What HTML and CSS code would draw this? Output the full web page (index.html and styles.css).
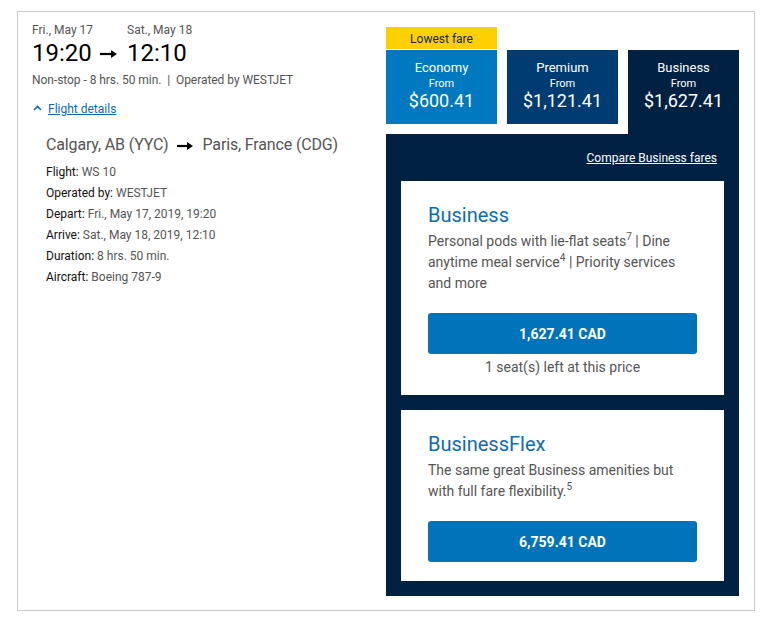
FILE: index.html
```html
<!DOCTYPE html>
<html lang="en">
<head>
<meta charset="utf-8">
<title>Flight YYC – CDG</title>
<link rel="stylesheet" href="styles.css">
</head>
<body>
<div class="result">
  <section class="flight">
    <div class="times">
      <div class="times-col first">
        <div class="date">Fri., May 17</div>
        <div class="clock"><span>19:20</span><svg class="arrow-lg" width="18" height="10" viewBox="0 0 18 10"><path d="M0 5h12" stroke="#000" stroke-width="2.2"/><path d="M11 1l6 4-6 4z" fill="#000"/></svg></div>
      </div>
      <div class="times-col">
        <div class="date">Sat., May 18</div>
        <div class="clock"><span>12:10</span></div>
      </div>
    </div>
    <div class="summary">Non-stop - 8 hrs. 50 min. &nbsp;|&nbsp; Operated by WESTJET</div>
    <div class="toggle">
      <svg class="chevron" width="9" height="6" viewBox="0 0 9 6"><path d="M1 5l3.5-3.5L8 5" fill="none" stroke="#0b6cb5" stroke-width="1.6"/></svg>
      <a href="#" class="link">Flight details</a>
    </div>
    <div class="details">
      <div class="route"><span>Calgary, AB (YYC)</span><svg class="arrow-md" width="17" height="10" viewBox="0 0 17 10"><path d="M0 5h11" stroke="#000" stroke-width="2.2"/><path d="M10 1l6 4-6 4z" fill="#000"/></svg><span>Paris, France (CDG)</span></div>
      <ul class="facts">
        <li><span class="label">Flight:</span> WS 10</li>
        <li><span class="label">Operated by:</span> WESTJET</li>
        <li><span class="label">Depart:</span> Fri., May 17, 2019, 19:20</li>
        <li><span class="label">Arrive:</span> Sat., May 18, 2019, 12:10</li>
        <li><span class="label">Duration:</span> 8 hrs. 50 min.</li>
        <li><span class="label">Aircraft:</span> Boeing 787-9</li>
      </ul>
    </div>
  </section>

  <section class="fares">
    <div class="tabs">
      <div class="tab-wrap">
        <div class="badge">Lowest fare</div>
        <div class="tab economy">
          <div class="tab-name">Economy</div>
          <div class="tab-from">From</div>
          <div class="tab-price">$600.41</div>
        </div>
      </div>
      <div class="tab premium">
        <div class="tab-name">Premium</div>
        <div class="tab-from">From</div>
        <div class="tab-price">$1,121.41</div>
      </div>
      <div class="tab business active">
        <div class="tab-name">Business</div>
        <div class="tab-from">From</div>
        <div class="tab-price">$1,627.41</div>
      </div>
    </div>
    <div class="panel">
      <div class="compare"><a href="#">Compare Business fares</a></div>
      <div class="fare-card">
        <h3>Business</h3>
        <p class="desc">Personal pods with lie-flat seats<sup>7</sup> | Dine anytime meal service<sup>4</sup> | Priority services and more</p>
        <button class="price-btn">1,627.41 CAD</button>
        <p class="seats">1 seat(s) left at this price</p>
      </div>
      <div class="fare-card">
        <h3>BusinessFlex</h3>
        <p class="desc">The same great Business amenities but with full fare flexibility.<sup>5</sup></p>
        <button class="price-btn">6,759.41 CAD</button>
      </div>
    </div>
  </section>
</div>
</body>
</html>
```

FILE: styles.css
```css
* {
  box-sizing: border-box;
}

body {
  margin: 0;
  background: #fff;
  font-family: Roboto, "Liberation Sans", Arial, sans-serif;
  color: #222;
}

.result {
  display: flex;
  width: 738px;
  height: 600px;
  margin: 11px 0 0 17px;
  border: 1px solid #cacaca;
}

/* Left: flight summary */
.flight {
  flex: 1;
  min-width: 0;
  padding: 11px 0 0 14px;
}

.times {
  display: flex;
}

.times-col.first {
  width: 95px;
}

.date {
  font-size: 12px;
  line-height: 14px;
  color: #555;
}

.clock {
  font-size: 24px;
  line-height: 33px;
  color: #000;
  display: flex;
  align-items: center;
}

.arrow-lg {
  margin-left: 8px;
  margin-top: 1px;
}

.summary {
  margin-top: 1px;
  font-size: 12px;
  line-height: 18px;
  color: #555;
  letter-spacing: -0.05px;
}

.toggle {
  display: flex;
  align-items: center;
  margin-top: 11px;
  font-size: 12px;
  line-height: 18px;
}

.chevron {
  margin: 0 6px 2px 1px;
}

.link {
  color: #0b6cb5;
  text-decoration: underline;
}

.details {
  padding-left: 14px;
}

.route {
  margin-top: 15px;
  font-size: 16px;
  line-height: 24px;
  color: #555;
  display: flex;
  align-items: center;
  white-space: nowrap;
  letter-spacing: -0.15px;
}

.arrow-md {
  margin: 1px 9px 0 8px;
}

.facts {
  list-style: none;
  margin: 5px 0 0;
  padding: 0;
  font-size: 12px;
  line-height: 20.9px;
  color: #555;
}

.facts .label {
  color: #111;
}

/* Right: fare selector */
.fares {
  width: 368px;
  padding: 15px 15px 0 0;
  display: flex;
  flex-direction: column;
}

.tabs {
  display: flex;
  align-items: flex-end;
  gap: 10px;
}

.tab-wrap {
  display: flex;
  flex-direction: column;
  gap: 1px;
  margin-bottom: 10px;
}

.badge {
  width: 111px;
  height: 22px;
  padding-top: 2px;
  background: #ffd000;
  color: #0c2a52;
  font-size: 12px;
  line-height: 20px;
  text-align: center;
}

.tab {
  width: 111px;
  height: 74px;
  padding-top: 10px;
  color: #fff;
  text-align: center;
}

.economy {
  background: #0079c1;
}

.premium {
  background: #003c71;
  margin-bottom: 10px;
}

.business {
  background: #002142;
  height: 84px;
}

.tab-name {
  font-size: 13px;
  line-height: 16px;
}

.tab-from {
  font-size: 11px;
  line-height: 15px;
}

.tab-price {
  font-size: 18px;
  line-height: 19px;
}

.panel {
  background: #002142;
  padding: 15px;
  display: flex;
  flex-direction: column;
  gap: 15px;
  height: 462px;
}

.compare {
  text-align: right;
  font-size: 12px;
  line-height: 18px;
  padding-right: 7px;
  margin-bottom: -1px;
}

.compare a {
  color: #fff;
  text-decoration: underline;
}

.fare-card {
  background: #fff;
  padding: 21px 27px 19px;
}

.fare-card h3 {
  margin: 0;
  font-size: 20px;
  line-height: 26px;
  font-weight: 400;
  color: #0d6bb4;
}

.desc {
  margin: 3px 0 0;
  font-size: 14px;
  line-height: 21px;
  color: #555;
}

.desc sup {
  font-size: 10px;
  line-height: 1;
  vertical-align: baseline;
  position: relative;
  top: -6px;
}

.price-btn {
  display: block;
  width: 100%;
  height: 41px;
  margin-top: 19px;
  border: 0;
  border-radius: 3px;
  background: #0073bb;
  color: #fff;
  font-family: inherit;
  font-size: 14px;
  font-weight: 700;
}

.seats {
  margin: 4px 0 0;
  font-size: 14px;
  line-height: 18px;
  color: #555;
  text-align: center;
}
```
